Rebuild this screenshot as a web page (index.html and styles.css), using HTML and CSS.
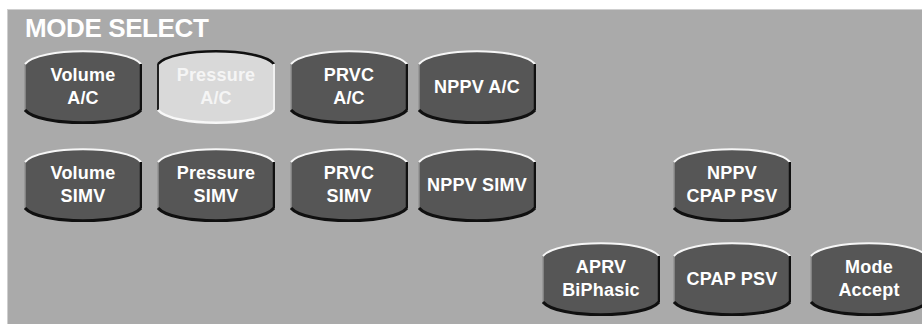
FILE: index.html
```html
<!DOCTYPE html>
<html lang="en">
<head>
    <meta charset="UTF-8">
    <meta name="viewport" content="width=device-width, initial-scale=1.0">
    <title>Mode Select</title>
    <link rel="stylesheet" href="styles.css">
</head>
<body>
    <div class="panel">
        <h1>MODE SELECT</h1>

        <div class="modes">
            <!-- row 1 -->
            <button class="mode c1 r1">Volume<br>A/C</button>
            <button class="mode selected c2 r1">Pressure<br>A/C</button>
            <button class="mode c3 r1">PRVC<br>A/C</button>
            <button class="mode c4 r1">NPPV A/C</button>

            <!-- row 2 -->
            <button class="mode c1 r2">Volume<br>SIMV</button>
            <button class="mode c2 r2">Pressure<br>SIMV</button>
            <button class="mode c3 r2">PRVC<br>SIMV</button>
            <button class="mode c4 r2">NPPV SIMV</button>
            <button class="mode c6 r2">NPPV<br>CPAP PSV</button>

            <!-- row 3 -->
            <button class="mode c5 r3">APRV<br>BiPhasic</button>
            <button class="mode c6 r3">CPAP PSV</button>
            <button class="mode c7 r3">Mode<br>Accept</button>
        </div>
    </div>
</body>
</html>
```

FILE: styles.css
```css
html, body {
    margin: 0;
    height: 100%;
    overflow: hidden;
    background: #fff;
}
body {
    font-family: "Liberation Sans", Arial, sans-serif;
}
.panel {
    margin: 9px 0 0 7px;
    height: calc(100% - 9px);
    box-sizing: border-box;
    background: #aaaaaa;
    border-top: 1px solid #cfcfcf;
    border-left: 1px solid #cfcfcf;
    padding: 4px 0 0 16px;
    overflow: hidden;
}
.panel h1 {
    margin: 0 0 8px 1px;
    font-size: 26px;
    line-height: 28px;
    letter-spacing: -0.4px;
    font-weight: bold;
    color: #fff;
}
.modes {
    display: grid;
    grid-template-columns: 133px 133px 128px 124px 131px 137px 117px;
    grid-template-rows: 98px 94px 74px;
}
.mode {
    width: 118px;
    height: 74px;
    padding: 0;
    border: none;
    background-color: transparent;
    background-image: url("data:image/svg+xml;utf8,<svg xmlns='http://www.w3.org/2000/svg' viewBox='0 0 118 74' preserveAspectRatio='none'><path d='M1 14 C15 -3 103 -3 117 14 L117 60 C103 77 15 77 1 60 Z' fill='%23565656'/><path d='M1 60 L1 14' fill='none' stroke='%23939393' stroke-width='1.5'/><path d='M1 14 C15 -3 103 -3 117 14' fill='none' stroke='%23f6f6f6' stroke-width='2'/><path d='M117 14 L117 60' fill='none' stroke='%23101010' stroke-width='2.5'/><path d='M117 60 C103 77 15 77 1 60' fill='none' stroke='%23101010' stroke-width='3'/></svg>");
    background-size: 100% 100%;
    color: #fff;
    font-family: "Liberation Sans", Arial, sans-serif;
    font-weight: bold;
    font-size: 18px;
    line-height: 23px;
    letter-spacing: 0.2px;
    text-align: center;
    cursor: pointer;
}
.mode.selected {
    background-image: url("data:image/svg+xml;utf8,<svg xmlns='http://www.w3.org/2000/svg' viewBox='0 0 118 74' preserveAspectRatio='none'><path d='M1 14 C15 -3 103 -3 117 14 L117 60 C103 77 15 77 1 60 Z' fill='%23d9d9d9'/><path d='M1 60 L1 14' fill='none' stroke='%23202020' stroke-width='2'/><path d='M1 14 C15 -3 103 -3 117 14' fill='none' stroke='%23101010' stroke-width='2.5'/><path d='M117 14 L117 60' fill='none' stroke='%23f0f0f0' stroke-width='2'/><path d='M117 60 C103 77 15 77 1 60' fill='none' stroke='%23f8f8f8' stroke-width='2.5'/></svg>");
    color: #f5f5f5;
}
.c1 { grid-column: 1; }
.c2 { grid-column: 2; }
.c3 { grid-column: 3; }
.c4 { grid-column: 4; }
.c5 { grid-column: 5; }
.c6 { grid-column: 6; }
.c7 { grid-column: 7; }
.r1 { grid-row: 1; }
.r2 { grid-row: 2; }
.r3 { grid-row: 3; }
```
